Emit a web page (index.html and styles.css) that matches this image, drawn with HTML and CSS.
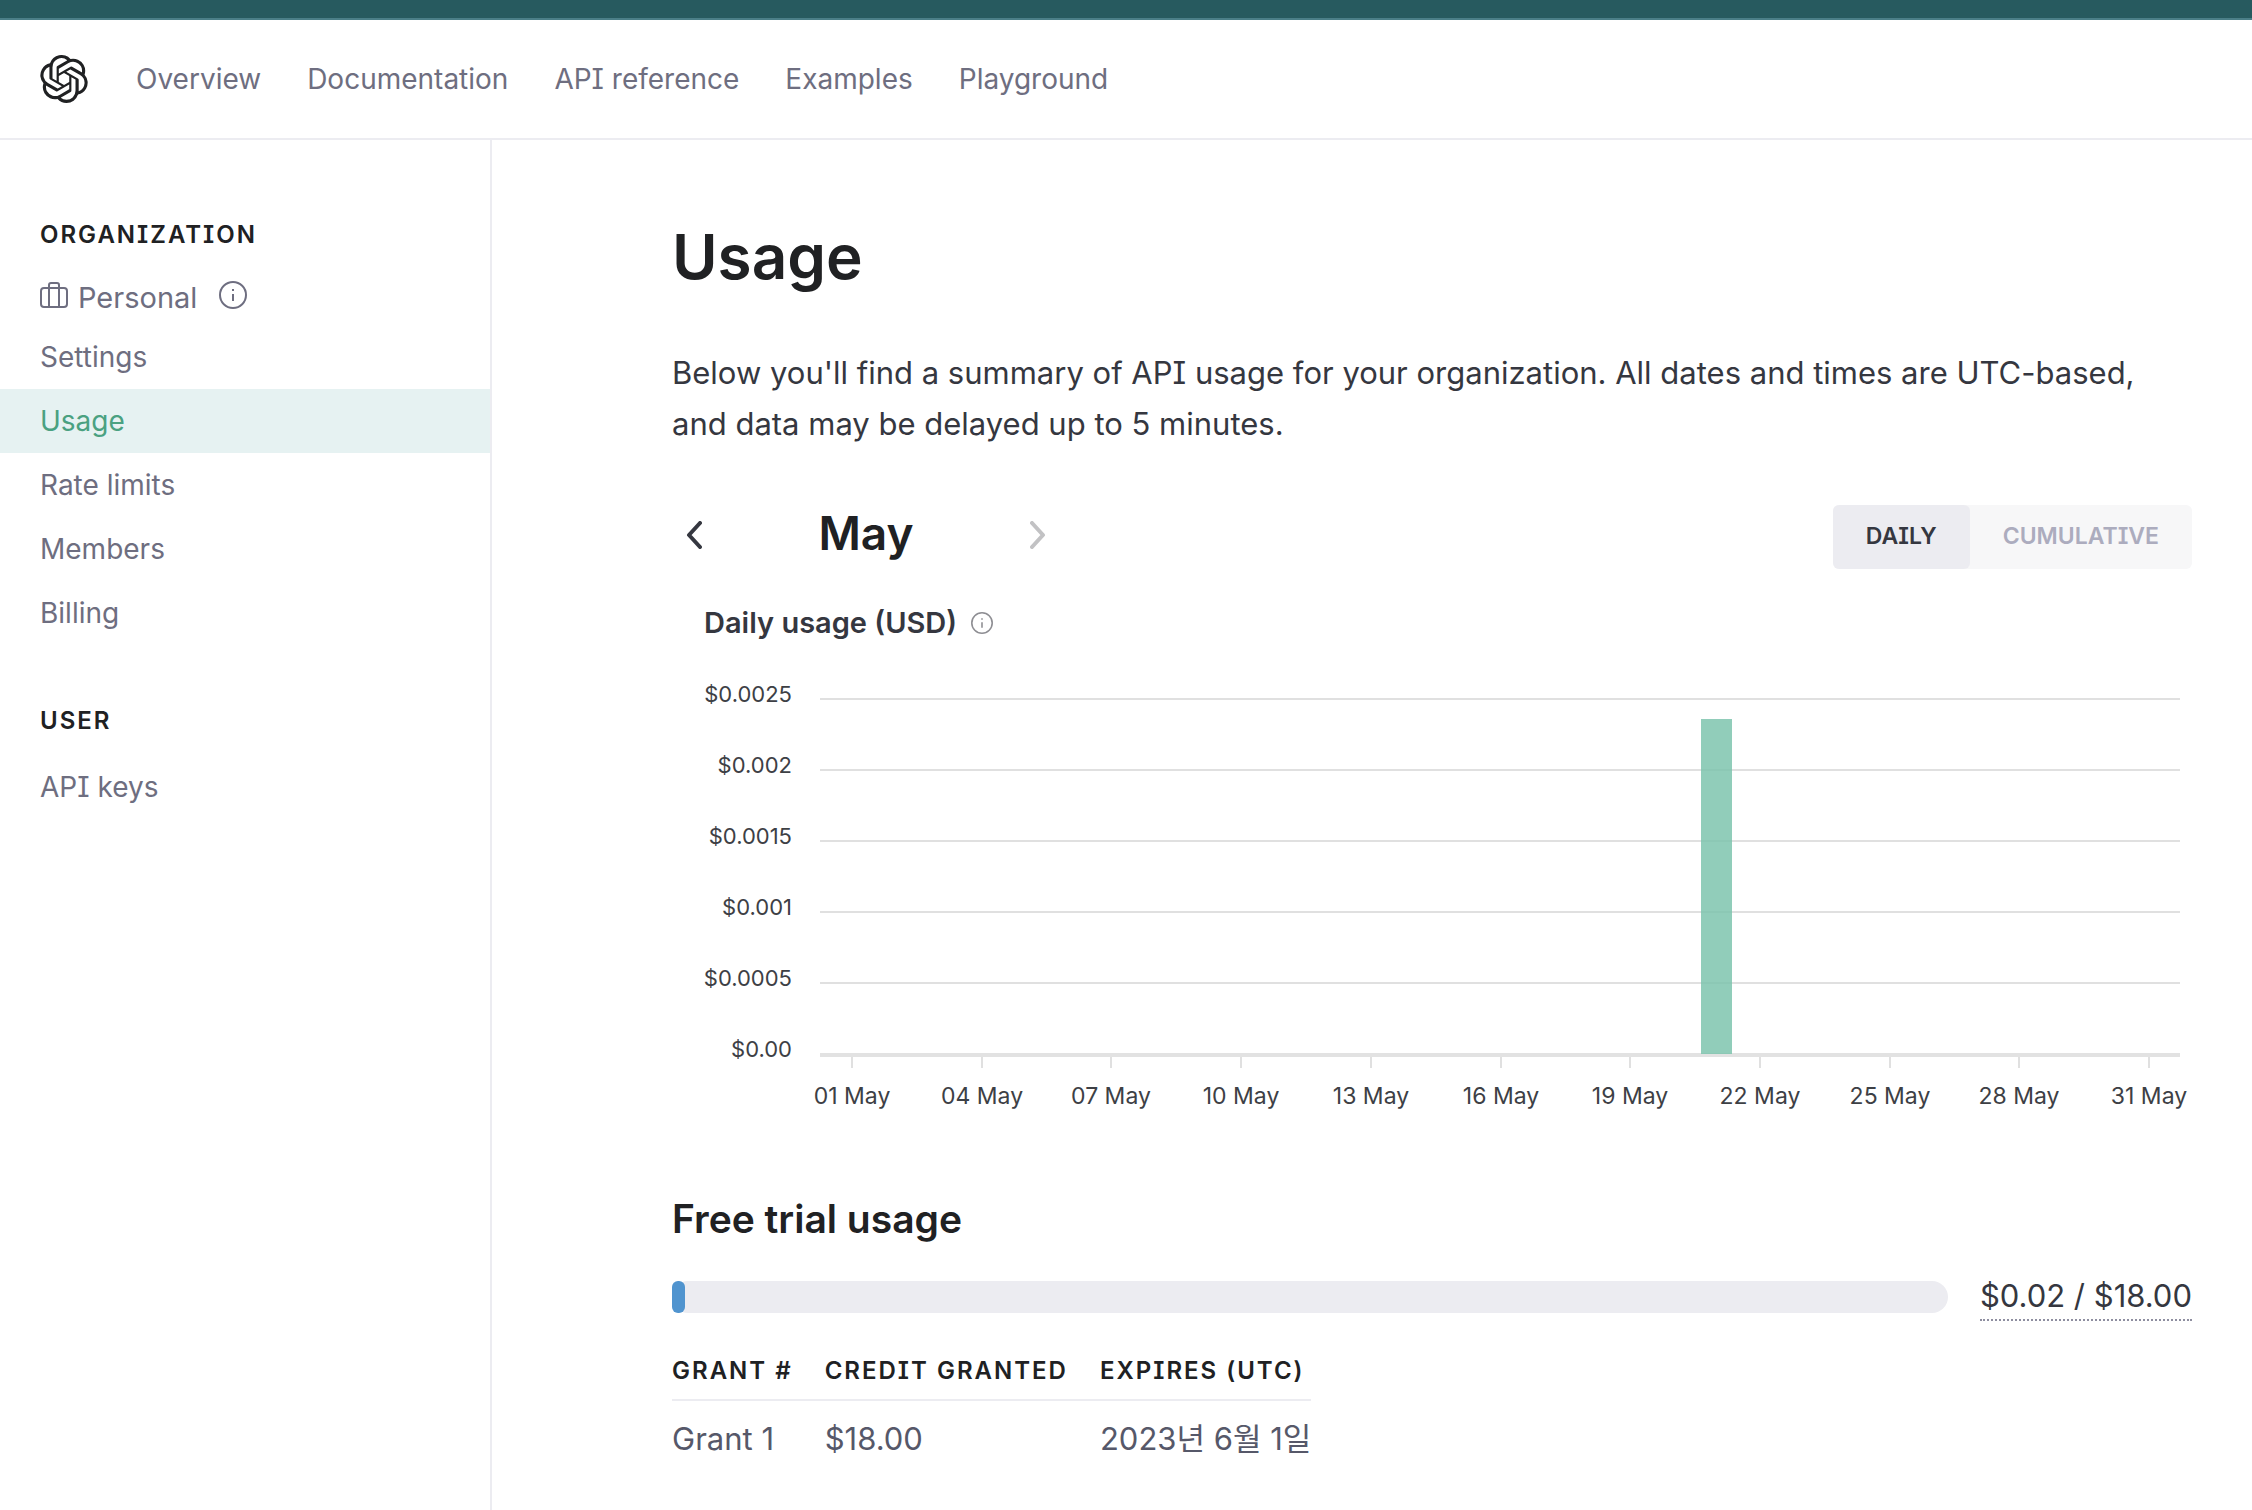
FILE: index.html
```html
<!DOCTYPE html>
<html lang="en">
<head>
    <meta charset="UTF-8">
    <meta name="viewport" content="width=device-width, initial-scale=1.0">
    <title>Usage - OpenAI API</title>
    <link rel="stylesheet" href="styles.css">
</head>
<body>
    <div class="top-strip"></div>

    <header class="header">
        <a class="logo" href="#" aria-label="OpenAI">
            <svg viewBox="0 0 24 24" fill="currentColor">
                <path d="M22.282 9.821a5.985 5.985 0 0 0-.516-4.91 6.046 6.046 0 0 0-6.51-2.9A6.065 6.065 0 0 0 4.981 4.18a5.985 5.985 0 0 0-3.998 2.9 6.046 6.046 0 0 0 .743 7.097 5.98 5.98 0 0 0 .51 4.911 6.051 6.051 0 0 0 6.515 2.9A5.985 5.985 0 0 0 13.26 24a6.056 6.056 0 0 0 5.772-4.206 5.99 5.99 0 0 0 3.997-2.9 6.056 6.056 0 0 0-.747-7.073zM13.26 22.43a4.476 4.476 0 0 1-2.876-1.04l.141-.081 4.779-2.758a.795.795 0 0 0 .392-.681v-6.737l2.02 1.168a.071.071 0 0 1 .038.052v5.583a4.504 4.504 0 0 1-4.494 4.494zM3.6 18.304a4.47 4.47 0 0 1-.535-3.014l.142.085 4.783 2.759a.771.771 0 0 0 .78 0l5.843-3.369v2.332a.08.08 0 0 1-.033.062L9.74 19.95a4.5 4.5 0 0 1-6.14-1.646zM2.34 7.896a4.485 4.485 0 0 1 2.366-1.973V11.6a.766.766 0 0 0 .388.676l5.815 3.355-2.02 1.168a.076.076 0 0 1-.071 0l-4.83-2.786A4.504 4.504 0 0 1 2.34 7.872zm16.597 3.855l-5.833-3.387L15.119 7.2a.076.076 0 0 1 .071 0l4.83 2.791a4.494 4.494 0 0 1-.676 8.105v-5.678a.79.79 0 0 0-.407-.667zm2.01-3.023l-.141-.085-4.774-2.782a.776.776 0 0 0-.785 0L9.409 9.23V6.897a.066.066 0 0 1 .028-.061l4.83-2.787a4.5 4.5 0 0 1 6.68 4.66zm-12.64 4.135l-2.02-1.164a.08.08 0 0 1-.038-.057V6.075a4.5 4.5 0 0 1 7.375-3.453l-.142.08L8.704 5.46a.795.795 0 0 0-.393.681zm1.097-2.365l2.602-1.5 2.607 1.5v2.999l-2.597 1.5-2.607-1.5z"/>
            </svg>
        </a>
        <nav class="nav">
            <a href="#">Overview</a>
            <a href="#">Documentation</a>
            <a href="#">API reference</a>
            <a href="#">Examples</a>
            <a href="#">Playground</a>
        </nav>
    </header>

    <div class="layout">
        <aside class="sidebar">
            <h2 class="side-heading">Organization</h2>
            <div class="org-name">
                <svg class="icon-case" viewBox="0 0 28 28" fill="none" stroke="currentColor" stroke-width="2">
                    <rect x="1" y="7" width="26" height="19" rx="3"/>
                    <path d="M9 26V4a2 2 0 0 1 2-2h6a2 2 0 0 1 2 2v22"/>
                </svg>
                <span>Personal</span>
                <svg class="icon-info" viewBox="0 0 28 28" fill="none" stroke="currentColor" stroke-width="2">
                    <circle cx="14" cy="14" r="13"/>
                    <path d="M14 13v7M14 8v2"/>
                </svg>
            </div>
            <nav class="side-nav">
                <a href="#">Settings</a>
                <a class="active" href="#">Usage</a>
                <a href="#">Rate limits</a>
                <a href="#">Members</a>
                <a href="#">Billing</a>
            </nav>
            <h2 class="side-heading">User</h2>
            <nav class="side-nav">
                <a href="#">API keys</a>
            </nav>
        </aside>

        <main class="main">
            <h1>Usage</h1>
            <p class="intro">Below you'll find a summary of API usage for your organization. All dates and times are UTC-based, and data may be delayed up to 5 minutes.</p>

            <div class="toolbar">
                <div class="month-picker">
                    <button type="button" aria-label="Previous month">
                        <svg viewBox="0 0 16 28" fill="none" stroke="currentColor" stroke-width="4" stroke-linecap="round" stroke-linejoin="round"><path d="M14 2 3 14l11 12"/></svg>
                    </button>
                    <span class="month">May</span>
                    <button type="button" aria-label="Next month" disabled>
                        <svg viewBox="0 0 16 28" fill="none" stroke="currentColor" stroke-width="4" stroke-linecap="round" stroke-linejoin="round"><path d="m2 2 11 12L2 26"/></svg>
                    </button>
                </div>
                <div class="toggle">
                    <button type="button" class="selected">Daily</button>
                    <button type="button">Cumulative</button>
                </div>
            </div>

            <section class="chart">
                <h3>
                    Daily usage (USD)
                    <svg class="icon-info small" viewBox="0 0 28 28" fill="none" stroke="currentColor" stroke-width="2">
                        <circle cx="14" cy="14" r="13"/>
                        <path d="M14 13v7M14 8v2"/>
                    </svg>
                </h3>
                <svg class="plot" viewBox="0 0 1488 450" role="img" aria-label="Daily usage in May">
                    <g class="grid">
                        <path d="M116 30h1360M116 101h1360M116 172h1360M116 243h1360M116 314h1360"/>
                        <path class="axis" d="M116 386h1360"/>
                        <path d="M148 388v11M278 388v11M407 388v11M537 388v11M667 388v11M797 388v11M926 388v11M1056 388v11M1186 388v11M1315 388v11M1445 388v11"/>
                    </g>
                    <rect class="bar" x="997" y="50" width="31" height="335"/>
                    <g class="y-labels">
                        <text x="88" y="33">$0.0025</text>
                        <text x="88" y="104">$0.002</text>
                        <text x="88" y="175">$0.0015</text>
                        <text x="88" y="246">$0.001</text>
                        <text x="88" y="317">$0.0005</text>
                        <text x="88" y="388">$0.00</text>
                    </g>
                    <g class="x-labels">
                        <text x="148" y="435">01 May</text>
                        <text x="278" y="435">04 May</text>
                        <text x="407" y="435">07 May</text>
                        <text x="537" y="435">10 May</text>
                        <text x="667" y="435">13 May</text>
                        <text x="797" y="435">16 May</text>
                        <text x="926" y="435">19 May</text>
                        <text x="1056" y="435">22 May</text>
                        <text x="1186" y="435">25 May</text>
                        <text x="1315" y="435">28 May</text>
                        <text x="1445" y="435">31 May</text>
                    </g>
                </svg>
            </section>

            <section class="trial">
                <h2>Free trial usage</h2>
                <div class="credit">
                    <div class="meter"><div class="meter-fill"></div></div>
                    <span class="amount">$0.02 / $18.00</span>
                </div>
                <table class="grants">
                    <thead>
                        <tr><th>Grant #</th><th>Credit granted</th><th>Expires (UTC)</th></tr>
                    </thead>
                    <tbody>
                        <tr><td>Grant 1</td><td>$18.00</td><td>2023년 6월 1일</td></tr>
                    </tbody>
                </table>
            </section>
        </main>
    </div>
</body>
</html>
```
FILE: styles.css
```css
:root {
    --text: #353740;
    --heading: #202123;
    --muted: #6e6e80;
    --line: #ececf1;
    --green: #4aa181;
}

* {
    box-sizing: border-box;
}

body {
    margin: 0;
    min-height: 100vh;
    display: flex;
    flex-direction: column;
    background: #fff;
    color: var(--text);
    font-family: Inter, "Noto Sans CJK KR", sans-serif;
    font-feature-settings: "cv08";
    font-size: 31px;
}

a {
    color: inherit;
    text-decoration: none;
}

h1, h2, h3, p {
    margin: 0;
}

h1, h2, h3, .month {
    color: var(--heading);
    font-weight: 600;
}

svg {
    display: block;
}

button {
    border: 0;
    padding: 0;
    background: none;
    color: inherit;
    font: inherit;
    font-feature-settings: inherit;
}

.top-strip {
    height: 20px;
    background: #275a5f;
    border-bottom: 2px solid #4b7f88;
}

/* header */
.header {
    display: flex;
    align-items: center;
    gap: 48px;
    height: 120px;
    padding: 0 40px;
    border-bottom: 2px solid var(--line);
}

.logo svg {
    width: 48px;
    height: 48px;
    color: var(--heading);
}

.nav {
    display: flex;
    gap: 46px;
    color: var(--muted);
    font-size: 28px;
}

/* sidebar */
.layout {
    flex: 1;
    display: flex;
}

.sidebar {
    flex: 0 0 492px;
    padding-top: 77px;
    border-right: 2px solid var(--line);
    color: var(--muted);
}

.side-heading {
    margin-bottom: 16px;
    padding: 0 40px;
    font-size: 24px;
    line-height: 36px;
    letter-spacing: 2px;
    text-transform: uppercase;
}

.org-name {
    display: flex;
    align-items: center;
    gap: 10px;
    height: 48px;
    margin: 20px 0 4px;
    padding: 0 40px;
    font-size: 29px;
}

.icon-case, .icon-info {
    width: 28px;
    height: 28px;
}

.org-name svg {
    margin-bottom: 4px;
}

.org-name .icon-info {
    margin-left: 12px;
}

.side-nav {
    margin-bottom: 58px;
    font-size: 28px;
}

.side-nav a {
    display: block;
    padding: 0 40px;
    line-height: 64px;
}

.side-nav .active {
    background: #e6f2f2;
    color: var(--green);
}

/* content */
.main {
    flex: 1;
    padding: 77px 60px 20px 180px;
}

h1 {
    font-size: 62px;
    line-height: 80px;
}

.intro {
    margin-top: 50px;
    line-height: 51px;
}

.toolbar {
    display: flex;
    justify-content: space-between;
    align-items: center;
    margin-top: 56px;
}

.month-picker {
    display: flex;
    align-items: center;
    justify-content: space-between;
    width: 388px;
    padding: 0 14px 4px;
}

.month-picker svg {
    width: 16px;
    height: 28px;
}

.month-picker button:disabled {
    color: #c2c2c4;
}

.month {
    padding-bottom: 4px;
    font-size: 46px;
    line-height: 56px;
}

.toggle {
    display: flex;
    border-radius: 6px;
    background: #f7f7f8;
    font-size: 23px;
}

.toggle button {
    height: 64px;
    padding: 0 33px 2px;
    border-radius: 6px;
    color: #acacbe;
    font-weight: 600;
    text-transform: uppercase;
}

.toggle .selected {
    background: #ececf1;
    color: var(--text);
}

/* chart */
.chart {
    margin-top: 32px;
    padding-left: 32px;
}

.chart h3 {
    display: flex;
    align-items: center;
    gap: 14px;
    color: var(--text);
    font-size: 29px;
    line-height: 44px;
}

.icon-info.small {
    width: 22px;
    height: 22px;
    color: #8e8e93;
}

.plot {
    width: 100%;
    margin-top: 24px;
    overflow: visible;
    fill: #3d4045;
}

.grid path {
    fill: none;
    stroke: #e0e0e0;
    stroke-width: 2;
}

.grid .axis {
    stroke: #e2e2e2;
    stroke-width: 4;
}

.bar {
    fill: #79c2ab;
    fill-opacity: 0.82;
}

.y-labels {
    font-size: 22px;
    text-anchor: end;
}

.x-labels {
    font-size: 23px;
    text-anchor: middle;
}

/* free trial */
.trial h2 {
    margin-top: 76px;
    font-size: 39px;
    line-height: 48px;
}

.credit {
    display: flex;
    align-items: center;
    gap: 32px;
    margin-top: 30px;
}

.meter {
    flex: 1;
    height: 32px;
    border-radius: 16px;
    background: #ececf1;
}

.meter-fill {
    width: 1%;
    height: 100%;
    border-radius: 6px;
    background: #5094cf;
}

.amount {
    border-bottom: 2px dotted #8e8ea0;
    line-height: 46px;
}

.grants {
    margin-top: 32px;
    border-collapse: collapse;
    color: #565869;
    text-align: left;
}

.grants th {
    padding: 0 32px 10px 0;
    border-bottom: 2px solid var(--line);
    color: var(--heading);
    font-size: 24px;
    font-weight: 600;
    line-height: 36px;
    letter-spacing: 2px;
    text-transform: uppercase;
}

.grants td {
    padding: 16px 32px 0 0;
    line-height: 44px;
}

.grants th:last-child,
.grants td:last-child {
    padding-right: 0;
}
```
